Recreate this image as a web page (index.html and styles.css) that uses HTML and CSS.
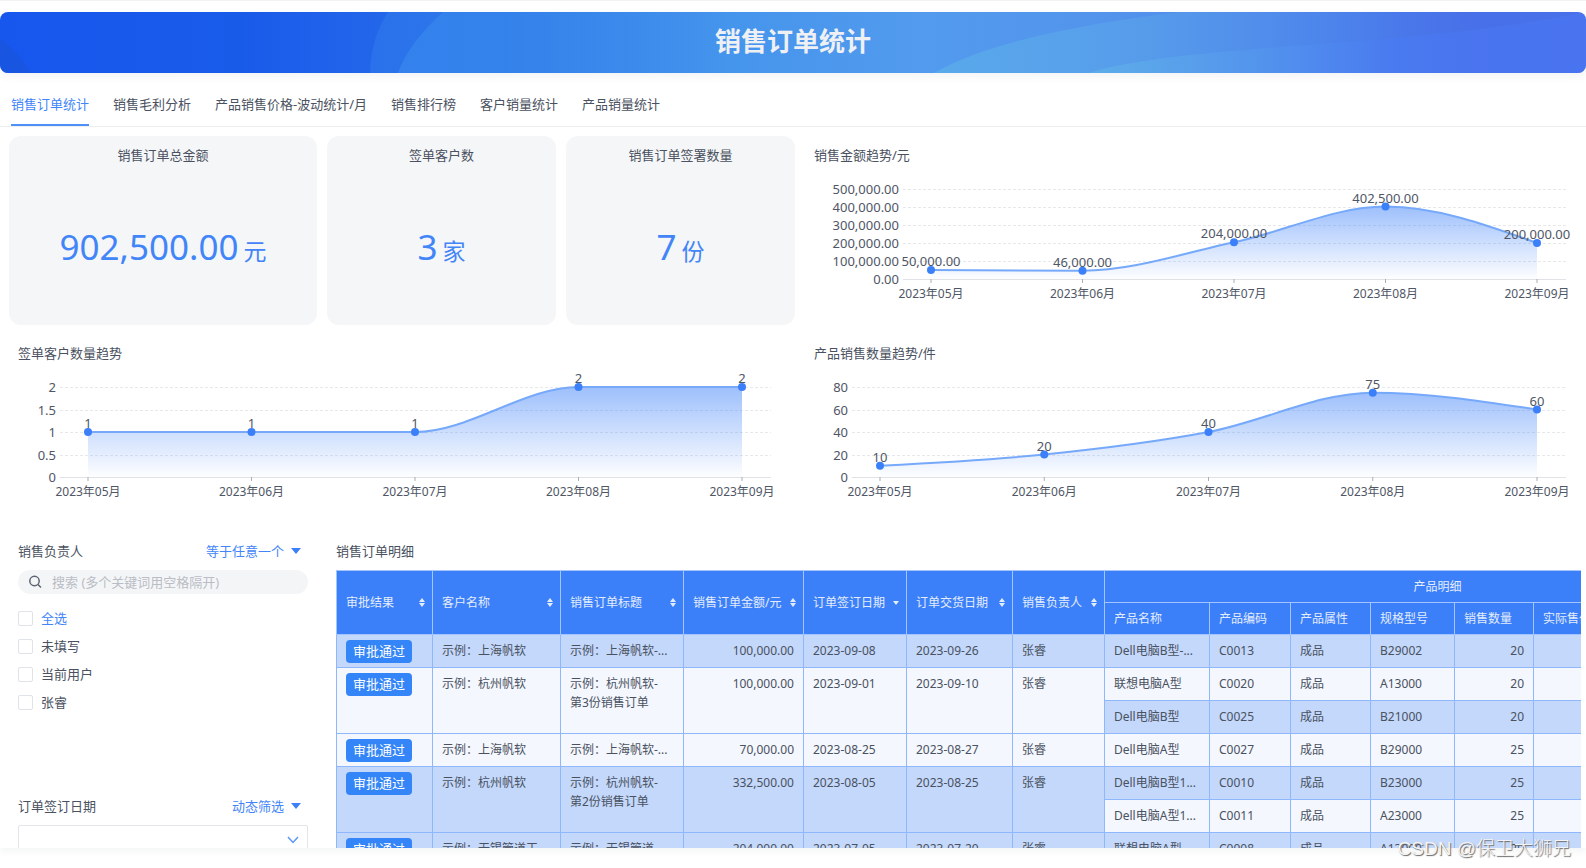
FILE: index.html
```html
<!DOCTYPE html>
<html lang="zh-CN">
<head>
    <meta charset="UTF-8">
    <meta name="viewport" content="width=device-width, initial-scale=1.0">
    <title>销售订单统计</title>
    <link rel="stylesheet" href="styles.css">
</head>
<body>
    <header class="banner">
        <svg class="banner-art" viewBox="0 0 1586 61" preserveAspectRatio="none" aria-hidden="true">
            <defs>
                <linearGradient id="waveLeft" gradientUnits="userSpaceOnUse" x1="370" x2="800" y1="0" y2="0">
                    <stop offset="0" stop-color="#46a0f0" stop-opacity="0.35"/>
                    <stop offset="1" stop-color="#46a0f0" stop-opacity="0"/>
                </linearGradient>
                <linearGradient id="waveRight" gradientUnits="userSpaceOnUse" x1="934" x2="1400" y1="0" y2="0">
                    <stop offset="0" stop-color="#64c0e6" stop-opacity="0.55"/>
                    <stop offset="1" stop-color="#64c0e6" stop-opacity="0"/>
                </linearGradient>
                <linearGradient id="waveEdge" gradientUnits="userSpaceOnUse" x1="1088" x2="1586" y1="0" y2="0">
                    <stop offset="0" stop-color="#64c0e6" stop-opacity="0.3"/>
                    <stop offset="0.6" stop-color="#4a7cf8" stop-opacity="0.35"/>
                    <stop offset="1" stop-color="#4a76f4" stop-opacity="0.6"/>
                </linearGradient>
            </defs>
            <path d="M0 26 Q20 42 31 61 H0 Z" fill="#1a55dc" fill-opacity="0.7"/>
            <path d="M388 0 Q371 26 370 61 H1586 V0 Z" fill="url(#waveLeft)" fill-opacity="0.6"/>
            <path d="M443 0 Q408 32 398 61 H1586 V0 Z" fill="url(#waveLeft)"/>
            <path d="M934 61 Q1000 22 1179 0 H1586 C1400 38 1190 30 1088 61 Z" fill="url(#waveRight)" fill-opacity="0.7"/>
            <path d="M1088 61 C1190 30 1400 38 1586 0 V61 Z" fill="url(#waveRight)"/>
            <path d="M1088 61 C1190 30 1400 38 1586 0 V61 Z" fill="url(#waveEdge)"/>
        </svg>
        <h1>销售订单统计</h1>
    </header>

    <nav class="tabs">
        <a href="#" class="tab active">销售订单统计</a>
        <a href="#" class="tab">销售毛利分析</a>
        <a href="#" class="tab">产品销售价格-波动统计/月</a>
        <a href="#" class="tab">销售排行榜</a>
        <a href="#" class="tab">客户销量统计</a>
        <a href="#" class="tab">产品销量统计</a>
    </nav>

    <main class="board">
        <section class="card">
            <h2>销售订单总金额</h2>
            <p class="card-value">902,500.00<span>元</span></p>
        </section>
        <section class="card">
            <h2>签单客户数</h2>
            <p class="card-value">3<span>家</span></p>
        </section>
        <section class="card">
            <h2>销售订单签署数量</h2>
            <p class="card-value">7<span>份</span></p>
        </section>
        <section class="panel">
            <h2>销售金额趋势/元</h2>
            <svg class="chart" id="amountChart"></svg>
        </section>

        <section class="panel wide">
            <h2>签单客户数量趋势</h2>
            <svg class="chart" id="customerChart"></svg>
        </section>
        <section class="panel">
            <h2>产品销售数量趋势/件</h2>
            <svg class="chart" id="quantityChart"></svg>
        </section>

        <aside class="filters">
            <section class="filter">
                <div class="filter-head">
                    <h2>销售负责人</h2>
                    <div class="mode">
                        <select aria-label="销售负责人筛选方式"><option>等于任意一个</option></select>
                        <svg width="10" height="6" viewBox="0 0 10 6" aria-hidden="true"><path d="M0 0 H10 L5 6 Z"/></svg>
                    </div>
                </div>
                <div class="search">
                    <svg width="14" height="14" viewBox="0 0 14 14" aria-hidden="true"><circle cx="6.5" cy="6" r="4.7"/><path d="M10 9.5 L13 12.5"/></svg>
                    <input type="text" aria-label="搜索" placeholder="搜索 (多个关键词用空格隔开)">
                </div>
                <div class="options">
                    <label class="all"><input type="checkbox">全选</label>
                    <label><input type="checkbox">未填写</label>
                    <label><input type="checkbox">当前用户</label>
                    <label><input type="checkbox">张睿</label>
                </div>
            </section>
            <section class="filter">
                <div class="filter-head">
                    <h2>订单签订日期</h2>
                    <div class="mode">
                        <select aria-label="订单签订日期筛选方式"><option>动态筛选</option></select>
                        <svg width="10" height="6" viewBox="0 0 10 6" aria-hidden="true"><path d="M0 0 H10 L5 6 Z"/></svg>
                    </div>
                </div>
                <div class="date-box">
                    <select aria-label="订单签订日期"><option></option></select>
                    <svg width="12" height="8" viewBox="0 0 12 8" aria-hidden="true"><path d="M1 1 L6 6.5 L11 1"/></svg>
                </div>
            </section>
        </aside>

        <section class="details">
            <h2>销售订单明细</h2>
            <div class="table-wrap">
                <table>
                    <colgroup>
                        <col class="w-96"><col class="w-128"><col class="w-123"><col class="w-120"><col class="w-103">
                        <col class="w-106"><col class="w-92"><col class="w-105"><col class="w-81"><col class="w-80">
                        <col class="w-84"><col class="w-79"><col class="w-235">
                    </colgroup>
                    <thead>
                        <tr>
                            <th rowspan="2"><div class="th">审批结果<i class="sort"></i></div></th>
                            <th rowspan="2"><div class="th">客户名称<i class="sort"></i></div></th>
                            <th rowspan="2"><div class="th">销售订单标题<i class="sort"></i></div></th>
                            <th rowspan="2"><div class="th">销售订单金额/元<i class="sort"></i></div></th>
                            <th rowspan="2"><div class="th">订单签订日期<i class="sort desc"></i></div></th>
                            <th rowspan="2"><div class="th">订单交货日期<i class="sort"></i></div></th>
                            <th rowspan="2"><div class="th">销售负责人<i class="sort"></i></div></th>
                            <th colspan="6" class="group">产品明细</th>
                        </tr>
                        <tr>
                            <th>产品名称</th>
                            <th>产品编码</th>
                            <th>产品属性</th>
                            <th>规格型号</th>
                            <th>销售数量</th>
                            <th>实际售价/元</th>
                        </tr>
                    </thead>
                    <tbody>
                        <tr>
                            <td><span class="tag">审批通过</span></td>
                            <td>示例：上海帆软</td>
                            <td>示例：上海帆软-...</td>
                            <td class="num">100,000.00</td>
                            <td>2023-09-08</td>
                            <td>2023-09-26</td>
                            <td>张睿</td>
                            <td>Dell电脑B型-...</td>
                            <td>C0013</td>
                            <td>成品</td>
                            <td>B29002</td>
                            <td class="num">20</td>
                            <td></td>
                        </tr>
                        <tr>
                            <td rowspan="2"><span class="tag">审批通过</span></td>
                            <td rowspan="2">示例：杭州帆软</td>
                            <td rowspan="2">示例：杭州帆软-<br>第3份销售订单</td>
                            <td rowspan="2" class="num">100,000.00</td>
                            <td rowspan="2">2023-09-01</td>
                            <td rowspan="2">2023-09-10</td>
                            <td rowspan="2">张睿</td>
                            <td>联想电脑A型</td>
                            <td>C0020</td>
                            <td>成品</td>
                            <td>A13000</td>
                            <td class="num">20</td>
                            <td></td>
                        </tr>
                        <tr>
                            <td>Dell电脑B型</td>
                            <td>C0025</td>
                            <td>成品</td>
                            <td>B21000</td>
                            <td class="num">20</td>
                            <td></td>
                        </tr>
                        <tr>
                            <td><span class="tag">审批通过</span></td>
                            <td>示例：上海帆软</td>
                            <td>示例：上海帆软-...</td>
                            <td class="num">70,000.00</td>
                            <td>2023-08-25</td>
                            <td>2023-08-27</td>
                            <td>张睿</td>
                            <td>Dell电脑A型</td>
                            <td>C0027</td>
                            <td>成品</td>
                            <td>B29000</td>
                            <td class="num">25</td>
                            <td></td>
                        </tr>
                        <tr>
                            <td rowspan="2"><span class="tag">审批通过</span></td>
                            <td rowspan="2">示例：杭州帆软</td>
                            <td rowspan="2">示例：杭州帆软-<br>第2份销售订单</td>
                            <td rowspan="2" class="num">332,500.00</td>
                            <td rowspan="2">2023-08-05</td>
                            <td rowspan="2">2023-08-25</td>
                            <td rowspan="2">张睿</td>
                            <td>Dell电脑B型1...</td>
                            <td>C0010</td>
                            <td>成品</td>
                            <td>B23000</td>
                            <td class="num">25</td>
                            <td></td>
                        </tr>
                        <tr>
                            <td>Dell电脑A型1...</td>
                            <td>C0011</td>
                            <td>成品</td>
                            <td>A23000</td>
                            <td class="num">25</td>
                            <td></td>
                        </tr>
                        <tr>
                            <td><span class="tag">审批通过</span></td>
                            <td>示例：无锡管道工</td>
                            <td>示例：无锡管道</td>
                            <td class="num">204,000.00</td>
                            <td>2023-07-05</td>
                            <td>2023-07-20</td>
                            <td>张睿</td>
                            <td>联想电脑A型</td>
                            <td>C0008</td>
                            <td>成品</td>
                            <td>A13000</td>
                            <td class="num">20</td>
                            <td></td>
                        </tr>
                    </tbody>
                </table>
            </div>
        </section>
    </main>

    <div class="watermark">CSDN @保卫大狮兄</div>

    <script src="script.js"></script>
</body>
</html>
```
FILE: styles.css
```css
* {
    box-sizing: border-box;
}

body {
    font-family: "Noto Sans", "Noto Sans CJK SC", sans-serif;
    font-size: 13px;
    line-height: 20px;
    color: #4a5160;
    margin: 0;
    padding: 11px 0 20px;
    height: 100vh;
    display: flex;
    flex-direction: column;
    background: #fff;
    border-top: 1px solid #f3f3f5;
    position: relative;
    overflow: hidden;
}

h1, h2, p {
    margin: 0;
}

h2 {
    font-size: 13px;
    font-weight: normal;
}

select, input {
    font: inherit;
    color: inherit;
}

/* banner */
.banner {
    height: 61px;
    flex: none;
    border-radius: 8px;
    overflow: hidden;
    position: relative;
    display: flex;
    align-items: center;
    justify-content: center;
    padding-bottom: 4px;
    background: linear-gradient(90deg, #1757ee 0%, #195be9 15%, #2163ea 22%, #2a72e8 32%, #4594ec 46%, #529bee 58%, #5392ec 72%, #4b80ec 84%, #4870e8 93%, #4870e8 100%);
    box-shadow: 0 3px 8px rgba(80, 90, 120, 0.08);
}

.banner-art {
    position: absolute;
    inset: 0;
    width: 100%;
    height: 100%;
}

.banner h1 {
    position: relative;
    font-size: 26px;
    line-height: 40px;
    font-weight: bold;
    color: #eef0f4;
}

/* tabs */
.tabs {
    display: flex;
    flex: none;
    gap: 24px;
    height: 43px;
    margin-top: 11px;
    padding: 0 11px;
    border-bottom: 1px solid #eceef0;
}

.tab {
    line-height: 41px;
    color: #4a5160;
    text-decoration: none;
    border-bottom: 2px solid transparent;
}

.tab.active {
    color: #4285f8;
    border-bottom-color: #4f8ff8;
}

/* dashboard */
.board {
    flex: 1;
    min-height: 0;
    display: grid;
    grid-template-columns: 308fr 229fr 229fr 776fr;
    grid-template-rows: 189px 189px auto;
    gap: 9px 10px;
    padding: 9px 5px 0 9px;
    overflow: hidden;
    box-shadow: 0 4px 6px rgba(60, 70, 90, 0.05);
}

.board > * {
    min-width: 0;
}

.card {
    display: flex;
    flex-direction: column;
    background: #f5f6f8;
    border-radius: 12px;
    padding-top: 9px;
    text-align: center;
}

.card-value {
    margin: 58px 0 auto;
    font-size: 35px;
    line-height: 48px;
    color: #4285f8;
}

.card-value span {
    font-size: 23px;
    margin-left: 5px;
}

.panel {
    padding-top: 9px;
}

.panel h2 {
    padding-left: 9px;
}

.wide {
    grid-column: span 3;
}

.chart {
    display: block;
    width: 100%;
    height: 150px;
}

.chart text {
    font-size: 13px;
    fill: #4f5665;
}

.chart .month {
    font-size: 12px;
}

.chart .split {
    stroke: #e6e8eb;
    stroke-dasharray: 3 2;
}

.chart .axis {
    stroke: #e0e2e6;
}

.chart .tick {
    stroke: #a9adb5;
}

.chart .line {
    fill: none;
    stroke: #76a9fa;
    stroke-width: 2;
}

.chart .dot {
    fill: #3c80f9;
}

/* filters */
.filters {
    display: flex;
    flex-direction: column;
    gap: 9px;
    padding: 0 9px;
}

.filter {
    min-height: 246px;
    padding-top: 9px;
}

.filter-head {
    display: flex;
    justify-content: space-between;
    margin-bottom: 9px;
}

.mode {
    display: flex;
    align-items: center;
    gap: 6px;
    padding-right: 7px;
    color: #4285f8;
    fill: #3c80f9;
}

.mode select {
    appearance: none;
    border: none;
    background: none;
    padding: 0;
}

.search {
    display: flex;
    align-items: center;
    gap: 10px;
    height: 24px;
    padding: 0 10px;
    border-radius: 12px;
    background: #f4f5f7;
}

.search svg {
    flex: none;
    fill: none;
    stroke: #5d6470;
    stroke-width: 1.5;
}

.search input {
    flex: 1;
    min-width: 0;
    padding: 0;
    border: none;
    background: none;
    outline: none;
}

.search input::placeholder {
    color: #b9bdc5;
}

.options {
    display: flex;
    flex-direction: column;
    gap: 8px;
    margin-top: 14px;
}

.options label {
    display: flex;
    align-items: center;
    gap: 8px;
}

.options .all {
    color: #4285f8;
}

.options input {
    appearance: none;
    width: 15px;
    height: 15px;
    margin: 0;
    border: 1px solid #dfe2e6;
    border-radius: 2px;
    background: #fff;
}

.date-box {
    position: relative;
}

.date-box select {
    appearance: none;
    display: block;
    width: 100%;
    height: 32px;
    border: 1px solid #e3e5e9;
    border-radius: 2px;
    background: #fff;
}

.date-box svg {
    position: absolute;
    right: 9px;
    top: 11px;
    fill: none;
    stroke: #5b96f9;
    stroke-width: 1.5;
    pointer-events: none;
}

/* order table */
.details {
    grid-column: span 3;
    padding: 9px 0 0 9px;
}

.table-wrap {
    margin-top: 9px;
    overflow: hidden;
}

table {
    table-layout: fixed;
    width: 1432px;
    border-collapse: collapse;
    font-size: 12px;
    line-height: 19px;
}

.w-79 { width: 79px; }
.w-80 { width: 80px; }
.w-81 { width: 81px; }
.w-84 { width: 84px; }
.w-92 { width: 92px; }
.w-96 { width: 96px; }
.w-103 { width: 103px; }
.w-105 { width: 105px; }
.w-106 { width: 106px; }
.w-120 { width: 120px; }
.w-123 { width: 123px; }
.w-128 { width: 128px; }
.w-235 { width: 235px; }

th {
    height: 32px;
    padding: 0 7px 0 9px;
    background: #3c80f9;
    border: 1px solid #a3c4fc;
    color: #e4edfe;
    font-weight: normal;
    text-align: left;
    white-space: nowrap;
}

.group {
    text-align: center;
}

.th {
    display: flex;
    align-items: center;
    justify-content: space-between;
}

.sort::before,
.sort::after {
    content: "";
    display: block;
    border: 3px solid transparent;
}

.sort::before {
    border-top-width: 0;
    border-bottom: 4px solid #e4edfe;
    margin-bottom: 1px;
}

.sort::after {
    border-bottom-width: 0;
    border-top: 4px solid #e4edfe;
}

.sort.desc::before {
    display: none;
}

td {
    height: 33px;
    padding: 6px 9px 7px;
    border: 1px solid #8fb7fb;
    vertical-align: top;
    white-space: nowrap;
    background: #f4f7fe;
}

tbody tr:nth-child(odd) td {
    background: #c3d8fb;
}

.num {
    text-align: right;
}

td:has(.tag) {
    padding-top: 5px;
    padding-bottom: 4px;
}

.tag {
    display: block;
    width: 66px;
    border-radius: 4px;
    background: #3385f8;
    color: #fff;
    font-size: 13px;
    line-height: 23px;
    text-align: center;
}

.watermark {
    position: absolute;
    right: 15px;
    bottom: 5px;
    font-family: "Liberation Sans", "Noto Sans CJK SC", sans-serif;
    font-size: 19px;
    font-weight: 300;
    line-height: 28px;
    color: #f4f4f4;
    text-shadow: 1px 1px 1px #666;
}
```
FILE: script.js
```js
const months = ['2023年05月', '2023年06月', '2023年07月', '2023年08月', '2023年09月'];

const charts = [
    { id: 'amountChart', values: [50000, 46000, 204000, 402500, 200000], max: 500000, step: 100000, decimals: 2, left: 98, right: 15 },
    { id: 'customerChart', values: [1, 1, 1, 2, 2], max: 2, step: 0.5, decimals: 0, left: 51, right: 24 },
    { id: 'quantityChart', values: [10, 20, 40, 75, 60], max: 80, step: 20, decimals: 0, left: 47, right: 15 }
];

function format(value, decimals) {
    return value.toLocaleString('en-US', { minimumFractionDigits: decimals });
}

// Smooth line that never goes past its points
function smoothPath(points) {
    const n = points.length;
    const slopes = [];
    for (let i = 0; i < n - 1; i++) {
        slopes.push((points[i + 1].y - points[i].y) / (points[i + 1].x - points[i].x));
    }

    const tangents = new Array(n).fill(0);
    for (let i = 1; i < n - 1; i++) {
        const a = slopes[i - 1];
        const b = slopes[i];
        if (a * b > 0) {
            tangents[i] = Math.sign(b) * Math.min(Math.abs(a + b) / 2, 2 * Math.min(Math.abs(a), Math.abs(b)));
        }
    }
    tangents[0] = (3 * slopes[0] - tangents[1]) / 2;
    tangents[n - 1] = (3 * slopes[n - 2] - tangents[n - 2]) / 2;

    let d = `M${points[0].x} ${points[0].y}`;
    for (let i = 0; i < n - 1; i++) {
        const p = points[i];
        const q = points[i + 1];
        const dx = (q.x - p.x) / 3;
        d += ` C${p.x + dx} ${p.y + dx * tangents[i]} ${q.x - dx} ${q.y - dx * tangents[i + 1]} ${q.x} ${q.y}`;
    }
    return d;
}

function drawChart(chart) {
    const svg = document.getElementById(chart.id);
    const width = svg.clientWidth;
    const top = 24;
    const bottom = 114;
    const end = width - chart.right;
    const first = chart.left + 28;
    const gap = (end - 29 - first) / (months.length - 1);
    const toY = value => bottom - value / chart.max * (bottom - top);
    const points = chart.values.map((value, i) => ({ x: first + i * gap, y: toY(value) }));
    const peak = Math.min(...points.map(p => p.y));
    let out = `<defs><linearGradient id="${chart.id}Fill" gradientUnits="userSpaceOnUse" x1="0" x2="0" y1="${peak}" y2="${bottom}">
        <stop offset="0" stop-color="#3c80f9" stop-opacity="0.5"/><stop offset="1" stop-color="#3c80f9" stop-opacity="0.01"/>
        </linearGradient></defs>`;

    for (let v = 0; v <= chart.max; v += chart.step) {
        const y = Math.round(toY(v)) + 0.5;
        out += `<line class="${v === 0 ? 'axis' : 'split'}" x1="${chart.left}" x2="${end}" y1="${y}" y2="${y}"/>`;
        out += `<text x="${chart.left - 4}" y="${y + 4}" text-anchor="end">${format(v, chart.decimals)}</text>`;
    }

    const line = smoothPath(points);
    out += `<path d="${line} V${bottom} H${points[0].x} Z" fill="url(#${chart.id}Fill)"/>`;
    out += `<path class="line" d="${line}"/>`;

    points.forEach((p, i) => {
        out += `<line class="tick" x1="${p.x}" x2="${p.x}" y1="${bottom}" y2="${bottom + 4}"/>`;
        out += `<text class="month" x="${p.x}" y="${bottom + 19}" text-anchor="middle">${months[i]}</text>`;
        out += `<text x="${p.x}" y="${p.y - 4}" text-anchor="middle">${format(chart.values[i], chart.decimals)}</text>`;
        out += `<circle class="dot" cx="${p.x}" cy="${p.y}" r="4"/>`;
    });
    svg.innerHTML = out;
}

function drawAll() {
    charts.forEach(drawChart);
}

drawAll();
window.addEventListener('resize', drawAll);
```
